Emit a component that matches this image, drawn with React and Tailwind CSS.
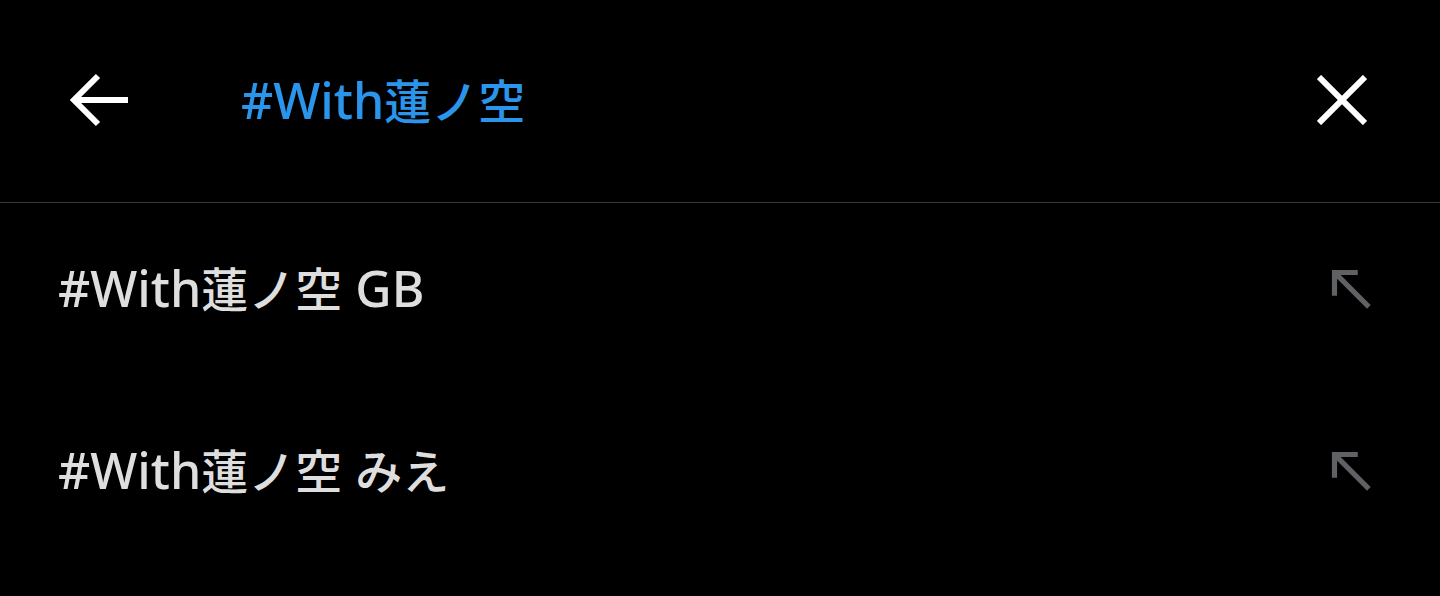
export default function App() {
  const latin = { fontFamily: '"Noto Sans", Roboto, "Noto Sans CJK JP", sans-serif' };
  const cjk = { fontFamily: '"Noto Sans CJK JP", sans-serif' };
  const NW = () => (
    <svg width="62" height="62" viewBox="0 0 24 24" fill="#5f6164">
      <path d="M5 15h2V8.41L18.59 20 20 18.59 8.41 7H15V5H5z" />
    </svg>
  );
  const Label = ({ parts, className }) => (
    <div className={"leading-none whitespace-pre flex items-baseline " + className}>
      {parts.map(([t, isCjk], i) =>
        isCjk ? (
          <span key={i} className="text-[47px] font-medium" style={cjk}>{t}</span>
        ) : (
          <span key={i} className="text-[50px] font-medium" style={latin}>{t}</span>
        )
      )}
    </div>
  );
  const rows = [
    [["#With", false], ["蓮ノ空", true], [" GB", false]],
    [["#With", false], ["蓮ノ空", true], [" ", false], ["みえ", true]],
  ];
  return (
    <div className="w-[1440px] h-[596px] bg-black overflow-hidden" style={latin}>
      <div className="h-[203px] flex items-center border-b border-[#3a3a3a] pb-[2px]">
        <div className="ml-[70px] w-[58px] flex items-center">
          <svg width="58" height="54" viewBox="0 0 58 54" fill="none" stroke="#ffffff" strokeWidth="6">
            <path d="M3 27H58" />
            <path d="M28 3L4 27L28 51" />
          </svg>
        </div>
        <Label className="ml-[113px] text-[#2a95ea]" parts={[["#With", false], ["蓮ノ空", true]]} />
        <div className="ml-auto mr-[73px]">
          <svg width="50" height="50" viewBox="0 0 50 50" fill="none" stroke="#ffffff" strokeWidth="6">
            <path d="M2 2L48 48M48 2L2 48" />
          </svg>
        </div>
      </div>
      <div className="flex flex-col">
        {rows.map((parts, i) => (
          <div key={i} className="h-[182px] flex items-center pl-[58px] pr-[59px] pb-[12px]">
            <Label className="text-[#dedede]" parts={parts} />
            <div className="ml-auto">
              <NW />
            </div>
          </div>
        ))}
      </div>
    </div>
  );
}
